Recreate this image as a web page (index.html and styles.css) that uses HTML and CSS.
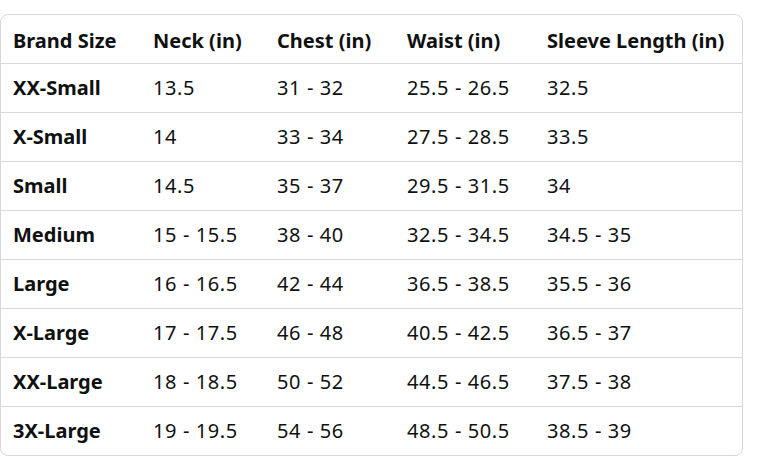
FILE: index.html
```html
<!DOCTYPE html>
<html>
<head>
<meta charset="utf-8">
<link rel="stylesheet" href="styles.css">
</head>
<body>
<div class="wrap">
<table class="size-table">
<colgroup>
<col class="c1"><col class="c2"><col class="c3"><col class="c4"><col class="c5">
</colgroup>
<thead>
<tr><th>Brand Size</th><th>Neck (in)</th><th>Chest (in)</th><th>Waist (in)</th><th>Sleeve Length (in)</th></tr>
</thead>
<tbody>
<tr><th>XX-Small</th><td>13.5</td><td>31 - 32</td><td>25.5 - 26.5</td><td>32.5</td></tr>
<tr><th>X-Small</th><td>14</td><td>33 - 34</td><td>27.5 - 28.5</td><td>33.5</td></tr>
<tr><th>Small</th><td>14.5</td><td>35 - 37</td><td>29.5 - 31.5</td><td>34</td></tr>
<tr><th>Medium</th><td>15 - 15.5</td><td>38 - 40</td><td>32.5 - 34.5</td><td>34.5 - 35</td></tr>
<tr><th>Large</th><td>16 - 16.5</td><td>42 - 44</td><td>36.5 - 38.5</td><td>35.5 - 36</td></tr>
<tr><th>X-Large</th><td>17 - 17.5</td><td>46 - 48</td><td>40.5 - 42.5</td><td>36.5 - 37</td></tr>
<tr><th>XX-Large</th><td>18 - 18.5</td><td>50 - 52</td><td>44.5 - 46.5</td><td>37.5 - 38</td></tr>
<tr><th>3X-Large</th><td>19 - 19.5</td><td>54 - 56</td><td>48.5 - 50.5</td><td>38.5 - 39</td></tr>
</tbody>
</table>
</div>
</body>
</html>
```
FILE: styles.css
```css
html, body { margin: 0; padding: 0; background: #fff; }
body { font-family: "Noto Sans", "DejaVu Sans", sans-serif; color: #0f1111; }
.wrap {
  margin: 14px 0 0 0;
  width: 743px;
  box-sizing: border-box;
  border: 1px solid #d5d9d9;
  border-radius: 8px;
  overflow: hidden;
}
.size-table {
  width: 100%;
  border-collapse: collapse;
  table-layout: fixed;
  font-size: 20px;
}
.c1 { width: 140px; }
.c2 { width: 124px; }
.c3 { width: 130px; }
.c4 { width: 140px; }
.c5 { width: auto; }
.size-table th, .size-table td {
  text-align: left;
  padding: 0 0 2px 12px;
  height: 46px;
  border-bottom: 1px solid #d5d9d9;
  white-space: nowrap;
  vertical-align: middle;
}
.size-table thead th { padding: 2px 0 0 12px; height: 46px; }
.size-table th { font-weight: 700; }
.size-table td { font-weight: 400; letter-spacing: 0.6px; }
.size-table tbody tr:last-child th, .size-table tbody tr:last-child td { border-bottom: none; }
```
